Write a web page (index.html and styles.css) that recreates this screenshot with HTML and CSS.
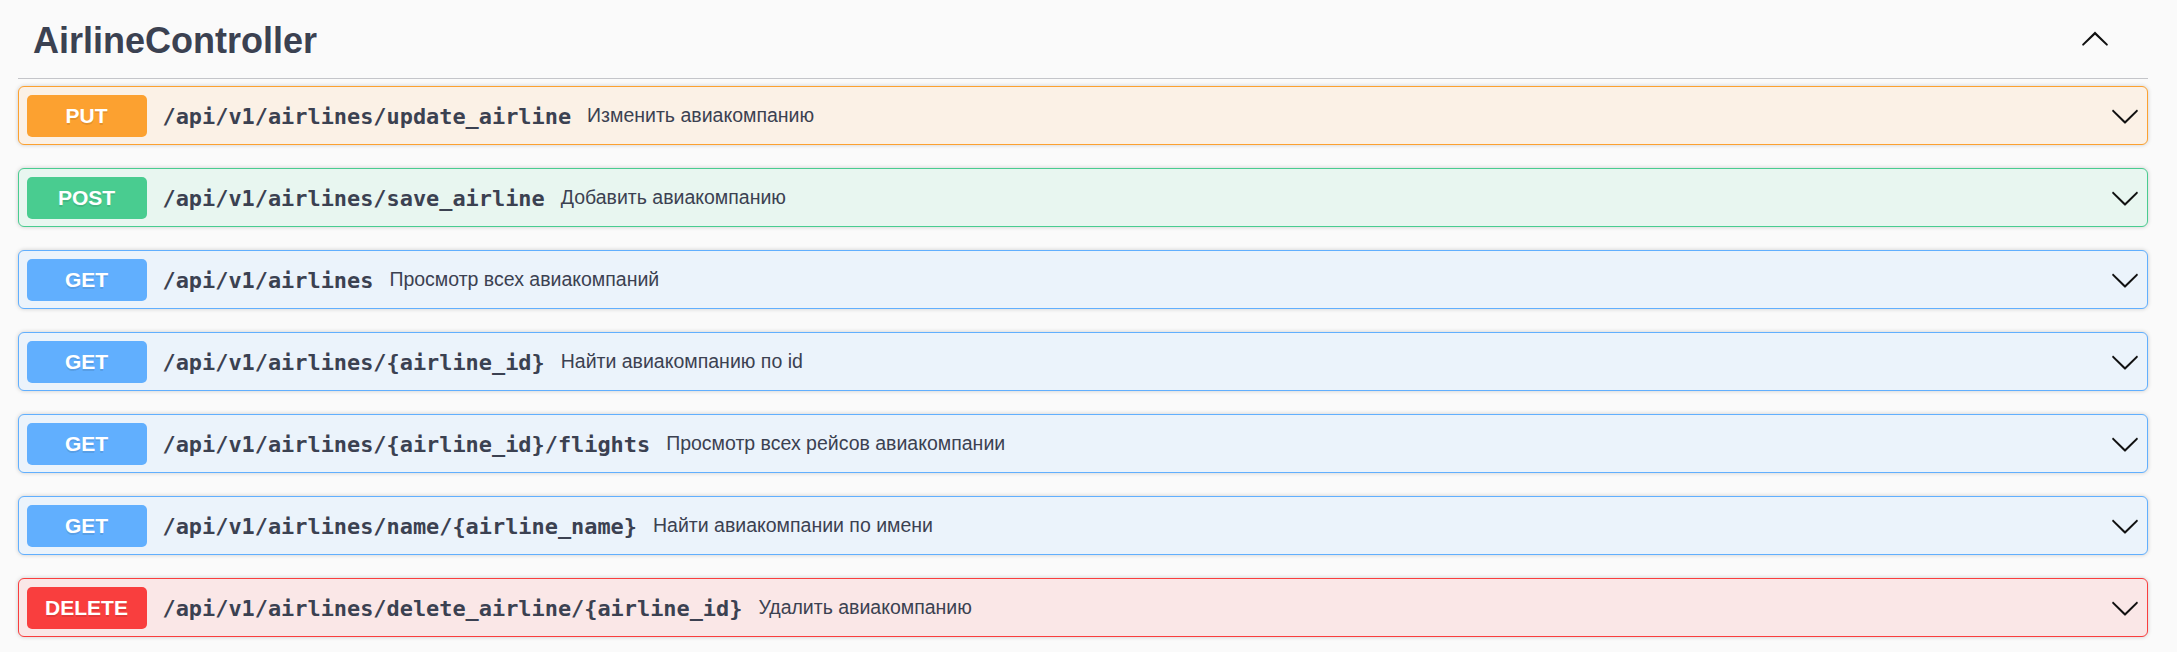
FILE: index.html
```html
<!DOCTYPE html>
<html lang="ru">
<head>
<meta charset="utf-8">
<title>AirlineController</title>
<link rel="stylesheet" href="styles.css">
</head>
<body>
<div class="section">
  <div class="tag">
    <h3 class="tag-title">AirlineController</h3>
    <button class="expand" aria-label="collapse">
      <svg viewBox="0 0 20 20" width="30" height="30"><path d="M17.418 14.908c.272.268.709.268.979 0s.271-.701 0-.969l-7.908-7.83c-.27-.268-.707-.268-.979 0l-7.908 7.83c-.27.268-.27.701 0 .969.271.268.709.268.979 0L10 7.767l7.418 7.141z"/></svg>
    </button>
  </div>
  <div class="ops">
    <div class="op put">
      <span class="method">PUT</span>
      <span class="path">/api/v1/airlines/update_airline</span>
      <span class="desc">Изменить авиакомпанию</span>
      <svg class="arrow" viewBox="0 0 20 20" width="30" height="30"><path d="M17.418 6.109c.272-.268.709-.268.979 0s.271.701 0 .969l-7.908 7.83c-.27.268-.707.268-.979 0l-7.908-7.830c-.27-.268-.27-.701 0-.969.271-.268.709-.268.979 0L10 13.25l7.418-7.141z"/></svg>
    </div>
    <div class="op post">
      <span class="method">POST</span>
      <span class="path">/api/v1/airlines/save_airline</span>
      <span class="desc">Добавить авиакомпанию</span>
      <svg class="arrow" viewBox="0 0 20 20" width="30" height="30"><path d="M17.418 6.109c.272-.268.709-.268.979 0s.271.701 0 .969l-7.908 7.83c-.27.268-.707.268-.979 0l-7.908-7.83c-.27-.268-.27-.701 0-.969.271-.268.709-.268.979 0L10 13.25l7.418-7.141z"/></svg>
    </div>
    <div class="op get">
      <span class="method">GET</span>
      <span class="path">/api/v1/airlines</span>
      <span class="desc">Просмотр всех авиакомпаний</span>
      <svg class="arrow" viewBox="0 0 20 20" width="30" height="30"><path d="M17.418 6.109c.272-.268.709-.268.979 0s.271.701 0 .969l-7.908 7.83c-.27.268-.707.268-.979 0l-7.908-7.83c-.27-.268-.27-.701 0-.969.271-.268.709-.268.979 0L10 13.25l7.418-7.141z"/></svg>
    </div>
    <div class="op get">
      <span class="method">GET</span>
      <span class="path">/api/v1/airlines/{airline_id}</span>
      <span class="desc">Найти авиакомпанию по id</span>
      <svg class="arrow" viewBox="0 0 20 20" width="30" height="30"><path d="M17.418 6.109c.272-.268.709-.268.979 0s.271.701 0 .969l-7.908 7.83c-.27.268-.707.268-.979 0l-7.908-7.83c-.27-.268-.27-.701 0-.969.271-.268.709-.268.979 0L10 13.25l7.418-7.141z"/></svg>
    </div>
    <div class="op get">
      <span class="method">GET</span>
      <span class="path">/api/v1/airlines/{airline_id}/flights</span>
      <span class="desc">Просмотр всех рейсов авиакомпании</span>
      <svg class="arrow" viewBox="0 0 20 20" width="30" height="30"><path d="M17.418 6.109c.272-.268.709-.268.979 0s.271.701 0 .969l-7.908 7.83c-.27.268-.707.268-.979 0l-7.908-7.83c-.27-.268-.27-.701 0-.969.271-.268.709-.268.979 0L10 13.25l7.418-7.141z"/></svg>
    </div>
    <div class="op get">
      <span class="method">GET</span>
      <span class="path">/api/v1/airlines/name/{airline_name}</span>
      <span class="desc">Найти авиакомпании по имени</span>
      <svg class="arrow" viewBox="0 0 20 20" width="30" height="30"><path d="M17.418 6.109c.272-.268.709-.268.979 0s.271.701 0 .969l-7.908 7.83c-.27.268-.707.268-.979 0l-7.908-7.83c-.27-.268-.27-.701 0-.969.271-.268.709-.268.979 0L10 13.25l7.418-7.141z"/></svg>
    </div>
    <div class="op delete">
      <span class="method">DELETE</span>
      <span class="path">/api/v1/airlines/delete_airline/{airline_id}</span>
      <span class="desc">Удалить авиакомпанию</span>
      <svg class="arrow" viewBox="0 0 20 20" width="30" height="30"><path d="M17.418 6.109c.272-.268.709-.268.979 0s.271.701 0 .969l-7.908 7.83c-.27.268-.707.268-.979 0l-7.908-7.83c-.27-.268-.27-.701 0-.969.271-.268.709-.268.979 0L10 13.25l7.418-7.141z"/></svg>
    </div>
  </div>
</div>
</body>
</html>
```

FILE: styles.css
```css
html, body {
  margin: 0;
  padding: 0;
  background: #fafafa;
}

body {
  font-family: "Liberation Sans", Arial, sans-serif;
  color: #3b4151;
}

.section {
  margin-left: 18px;
  width: 2130px;
}

.tag {
  display: flex;
  align-items: flex-start;
  justify-content: space-between;
  padding: 20.8px 38px 17.2px 15px;
  border-bottom: 1px solid #c4c5c9;
}

.tag-title {
  margin: 0;
  font-size: 36px;
  line-height: 40px;
  font-weight: bold;
  color: #3b4151;
}

.expand {
  border: none;
  background: none;
  padding: 0;
  margin-top: 2.4px;
  width: 30px;
  height: 30px;
  display: flex;
}

.expand svg,
.arrow {
  fill: #111;
  flex: none;
}

.ops {
  padding-top: 7.5px;
}

.op {
  display: flex;
  align-items: center;
  padding: 7.5px;
  margin-bottom: 23.3px;
  border: 1px solid;
  border-radius: 6px;
  box-shadow: 0 0 4.5px rgba(0, 0, 0, 0.19);
}

.method {
  flex: none;
  width: 120px;
  height: 41.7px;
  display: flex;
  align-items: center;
  justify-content: center;
  border-radius: 5px;
  font-size: 21px;
  font-weight: bold;
  color: #fff;
  text-shadow: 0 1.5px 0 rgba(0, 0, 0, 0.1);
}

.path {
  padding: 0 16px;
  font-family: "DejaVu Sans Mono", "Liberation Mono", monospace;
  font-weight: bold;
  font-size: 21.9px;
  color: #3b4151;
  margin-top: 2px;
}

.desc {
  flex: 1;
  font-size: 19.5px;
  color: #3b4151;
}

.put { border-color: #fca130; background: #fbf1e6; }
.put .method { background: #fca130; }

.post { border-color: #49cc90; background: #e8f6f0; }
.post .method { background: #49cc90; }

.get { border-color: #61affe; background: #ebf3fb; }
.get .method { background: #61affe; }

.delete { border-color: #f93e3e; background: #fae7e7; }
.delete .method { background: #f93e3e; }
```
